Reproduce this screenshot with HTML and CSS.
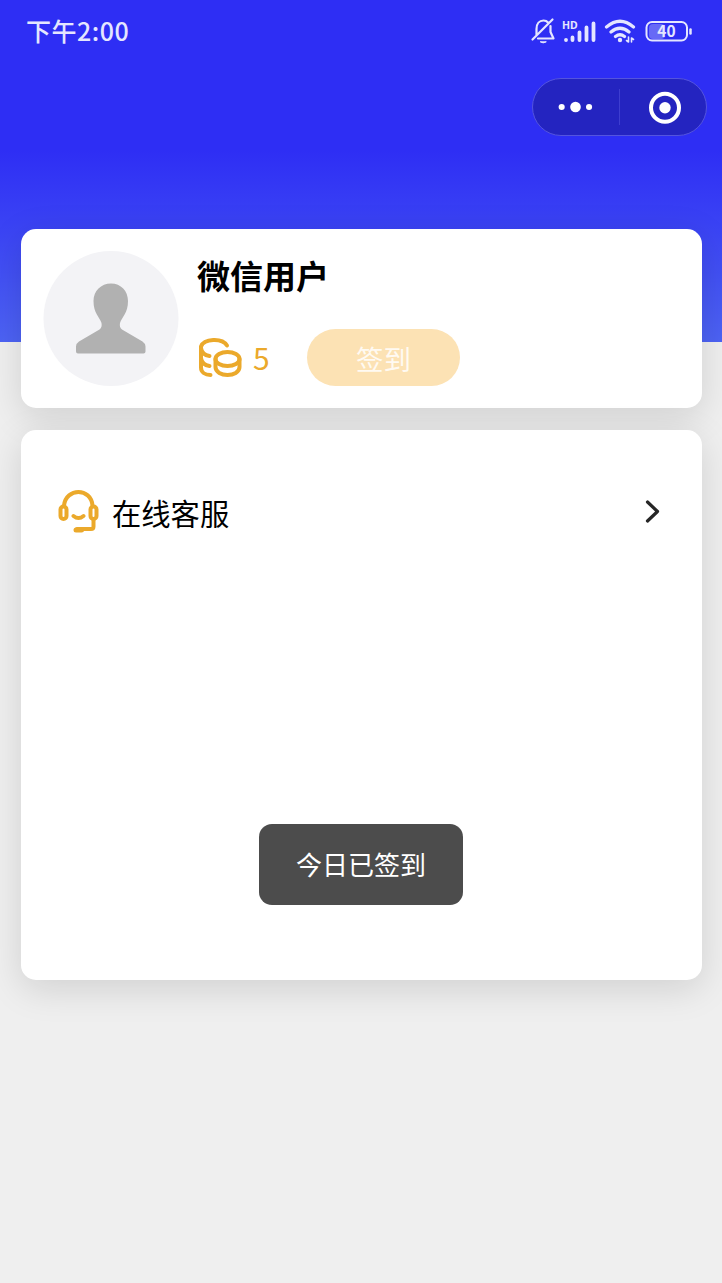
FILE: index.html
```html
<!DOCTYPE html>
<html lang="zh-CN">
<head>
<meta charset="utf-8">
<title>我的</title>
<link rel="stylesheet" href="styles.css">
</head>
<body>
<div class="page">
  <header class="status-bar">
    <span class="time">下午2:00</span>
    <svg class="status-icons" viewBox="528 14 168 34" fill="none" stroke="#e4e6ff" stroke-width="2.200" stroke-linecap="round" stroke-linejoin="round">
      <path d="M536.500 35V29C536.500 23.500 539.500 20.500 543.500 20.500C545.500 20.500 547 21.200 548 22.500M550.500 26V32L553.500 38.500H538M532.500 39.500L552.500 19.500"/>
      <path d="M540.500 42Q543 44 546 42Z" fill="#e4e6ff" stroke-width="1"/>
      <text class="hd" x="562" y="28.500">HD</text>
      <path d="M566 39.800V40M572.500 37.500V40M579.500 32.500V40M586.500 27.500V40M593.500 23.500V40" stroke-width="3.800"/>
      <path d="M606.500 27Q620 15.500 633.500 27M611 32Q620 24.500 629 32M615.500 36.500Q620 33 624.500 36.500" stroke-width="3.200"/>
      <circle cx="620" cy="40" r="2.200" fill="#e4e6ff" stroke="none"/>
      <path d="M628.500 37V42L626.500 40.500M631.500 42V38L633.500 39.500" stroke-width="1.600"/>
      <rect x="649" y="24" width="16" height="15" rx="4" fill="#6769f6" stroke="none"/>
      <rect x="646.500" y="22" width="40.500" height="18.500" rx="5.500" stroke-width="2"/>
      <path d="M690.500 29.500V33.500" stroke-width="2.500"/>
      <text class="battery" x="666.500" y="37.200" text-anchor="middle">40</text>
    </svg>
  </header>

  <nav class="capsule">
    <svg class="capsule-half" viewBox="0 0 87 56" fill="#fff"><circle cx="29" cy="28" r="3.100"/><circle cx="43" cy="28" r="5.400"/><circle cx="56.700" cy="28" r="3.100"/></svg>
    <span class="divider"></span>
    <svg class="capsule-half" viewBox="0 0 86 56"><circle cx="45" cy="28.700" r="14" fill="none" stroke="#fff" stroke-width="4"/><circle cx="45" cy="28.700" r="5.700" fill="#fff"/></svg>
  </nav>

  <main class="content">
    <section class="card profile">
      <svg class="avatar" viewBox="43 251 136 136">
        <circle cx="111" cy="318.500" r="67.500" fill="#f3f3f6"/>
        <path d="M111 283.500C121 283.500 128 291 128 301C128 313 122 317 120 323C119.500 326 120 328 122 329.500L142.500 341.500Q145.500 343.500 145.500 346.500V351.500Q145.500 353.500 143.500 353.500H78Q76 353.500 76 351.500V346.500Q76 343.500 79 341.500L99.500 329.500C101.500 328 102 326 101.500 323C99.500 317 93.500 313 93.500 301C93.500 291 101 283.500 111 283.500Z" fill="#b1b1b1"/>
      </svg>
      <div class="profile-info">
        <h1 class="name">微信用户</h1>
        <div class="points-row">
          <svg class="coins" viewBox="197 335 46 46" fill="none" stroke="#eba92b" stroke-width="4" stroke-linecap="round">
            <path d="M227 345.500C222 337.500 204 338.500 201 346.500V367.500C201 372 205 375 210.500 375M201 348Q202 355 209.500 356M201 358Q202 365 209.500 366"/>
            <ellipse cx="227.500" cy="359" rx="12" ry="7"/>
            <path d="M215.500 359V367C215.500 377.500 239.500 377.500 239.500 367V359"/>
          </svg>
          <span class="points">5</span>
          <button class="sign-in" type="button">签到</button>
        </div>
      </div>
    </section>

    <section class="card menu">
      <div class="menu-item">
        <svg class="headset" viewBox="56 488 46 46" fill="none" stroke="#eba92b" stroke-width="4" stroke-linecap="round" stroke-linejoin="round">
          <path d="M64 505.500C66 487.500 91 487.500 92.500 505.500M73.500 516Q78.500 520 83.500 516"/>
          <rect x="60.500" y="506.500" width="6" height="12.500" rx="3"/>
          <rect x="90.500" y="506.500" width="6" height="12.500" rx="3"/>
          <path d="M93.500 520V526.500Q93.500 529 91 529H77"/>
          <path d="M76 530H81.500" stroke-width="5"/>
        </svg>
        <span class="menu-label">在线客服</span>
        <svg class="chevron" viewBox="640 497 24 28" fill="none" stroke="#262626" stroke-width="3.200" stroke-linecap="round" stroke-linejoin="round"><path d="M647.500 502L657.500 511.500L647.500 521"/></svg>
      </div>
    </section>
  </main>
  <div class="toast">今日已签到</div>
</div>
</body>
</html>
```

FILE: styles.css
```css
* { box-sizing: border-box; }
body {
  margin: 0;
  background: #efefef;
  font-family: "Noto Sans CJK SC", sans-serif;
}
svg { display: block; flex: none; }
.page {
  position: relative;
  height: 1283px;
  overflow: hidden;
  background: linear-gradient(#2e2ef4 0, #2e2ef4 150px, #4d63f4 342px) top / 100% 342px no-repeat;
}
.status-bar {
  display: flex;
  justify-content: space-between;
  align-items: center;
  height: 62px;
  padding: 0 26px;
}
.time {
  color: #e4e6ff;
  font-size: 25px;
  letter-spacing: 0.5px;
  font-weight: 500;
  line-height: 60px;
  height: 62px;
}
.status-icons { width: 168px; height: 34px; }
.hd { font: bold 10.500px "Noto Sans", sans-serif; fill: #e4e6ff; stroke: none; }
.battery { font: 600 15.500px "Noto Sans CJK SC", sans-serif; fill: #e4e6ff; stroke: none; }
.capsule {
  display: flex;
  align-items: center;
  width: 175px;
  height: 58px;
  margin: 16px 15px 0 auto;
  border: 1px solid #5454de;
  border-radius: 29px;
  background: #2424c0;
}
.capsule-half { width: 86px; height: 56px; }
.divider { width: 1px; height: 36px; background: #3e3ed0; }
.content {
  display: flex;
  flex-direction: column;
  gap: 22px;
  padding: 93px 20px 0 21px;
}
.card {
  border-radius: 15px;
  background: #fff;
  box-shadow: 0 9px 36px rgba(0, 0, 0, 0.13);
}
.profile {
  display: flex;
  gap: 18px;
  height: 179px;
  padding: 22px;
}
.avatar { width: 136px; height: 136px; }
.name {
  margin: 0;
  height: 50px;
  font-size: 33px;
  font-weight: 700;
  line-height: 48px;
}
.points-row { display: flex; align-items: center; height: 57px; margin-top: 28px; }
.coins { width: 46px; height: 46px; }
.points { width: 64px; padding-left: 10px; color: #eba92b; font-size: 30px; line-height: 59px; }
.sign-in {
  width: 153px;
  height: 57px;
  padding: 0;
  border: 0;
  border-radius: 29px;
  background: #fce2b4;
  color: #fffaf2;
  font: 27.500px "Noto Sans CJK SC", sans-serif;
}
.menu { height: 550px; padding: 52px 38px 0 35px; }
.menu-item { display: flex; align-items: center; height: 58px; }
.headset { width: 46px; height: 46px; }
.menu-label { margin-left: 10px; padding-top: 2px; font-size: 29.300px; line-height: 58px; }
.chevron { width: 24px; height: 28px; margin-left: auto; }
.toast {
  position: absolute;
  left: 259px;
  top: 824px;
  width: 204px;
  height: 81px;
  border-radius: 13px;
  background: #4c4c4c;
  color: #fff;
  font-size: 26px;
  line-height: 80px;
  text-align: center;
}
```
